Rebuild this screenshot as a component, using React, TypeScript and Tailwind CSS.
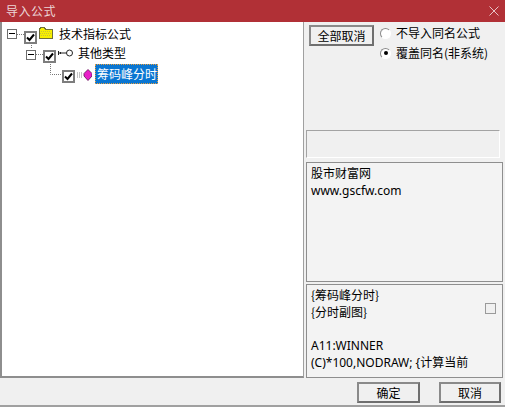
const font = { fontFamily: '"Noto Sans CJK SC", "Liberation Sans", sans-serif' }

function Expander({ className }: { className: string }) {
  return (
    <span className={`relative block w-[10px] h-[10px] border border-[#6d6d6d] bg-white shrink-0 ${className}`}>
      <span className="absolute left-[1px] top-[3px] w-[6px] h-[2px] border-t border-black" />
    </span>
  )
}

function Check({ className }: { className: string }) {
  return (
    <span className={`block w-[13px] h-[13px] border-2 border-[#7d7d7d] bg-white shrink-0 ${className}`}>
      <svg viewBox="0 0 9 9" className="w-[9px] h-[9px]">
        <path d="M1 4.5 L3.5 7 L8 1.5" fill="none" stroke="#000" strokeWidth="2" />
      </svg>
    </span>
  )
}

function Radio({ on, label }: { on?: boolean; label: string }) {
  return (
    <div className="flex items-center h-[20px]">
      <span className="flex items-center justify-center w-[11px] h-[11px] rounded-full border border-[#8a8a8a] border-r-white border-b-white bg-white shrink-0">
        {on && <span className="w-[4px] h-[4px] rounded-full bg-black" />}
      </span>
      <span className="ml-[5px] text-[12px] leading-[20px] text-black whitespace-nowrap">{label}</span>
    </div>
  )
}

function Btn({ label, className }: { label: string; className: string }) {
  return (
    <button className={`border-2 border-[#6f6f6f] border-t-[#8a8a8a] border-l-[#8a8a8a] bg-[#f0f0f0] text-[12px] leading-[16px] text-black ${className}`}>
      {label}
    </button>
  )
}

export default function App() {
  return (
    <div className="w-[505px] h-[407px] bg-[#f0f0f0] flex flex-col overflow-hidden" style={font}>
      <div className="h-[22px] bg-[#b13036] flex items-center justify-between shrink-0 pl-[6px] pr-[6px]">
        <span className="text-[12px] text-[#ecd5d6] tracking-[0.5px]">导入公式</span>
        <svg viewBox="0 0 10 10" className="w-[10px] h-[10px]">
          <path d="M0.5 0.5 L9.5 9.5 M9.5 0.5 L0.5 9.5" stroke="#e7c3c5" strokeWidth="1" />
        </svg>
      </div>

      <div className="flex h-[356px] shrink-0">
        <div className="relative w-[304px] bg-white border-l-2 border-b-2 border-[#8e8e8e] border-r border-r-[#a0a0a0] shrink-0">
          <svg className="absolute left-0 top-0 w-[100px] h-[70px]" viewBox="0 0 100 70">
            <path d="M15 12.5 H22 M29.5 21 V27 M34 32.5 H41 M48.5 40 V52.5 H60" fill="none" stroke="#777" strokeDasharray="1 1" />
          </svg>

          <div className="relative flex items-center h-[19px] mt-[2px]">
            <Expander className="ml-[5px] mt-[1px]" />
            <Check className="ml-[7px] mt-[7px]" />
            <svg viewBox="0 0 15 13" className="w-[15px] h-[13px] ml-[1px] -mt-[3px]" shapeRendering="crispEdges">
              <path d="M1 2 H2 V1 H6 V2 H7 V3 H14 V12 H1 Z" fill="#f7ef00" stroke="#6f6f3a" />
              <path d="M3 5 H13 M2 7 H13 M3 9 H13" stroke="#c9c23a" strokeDasharray="1 1" />
            </svg>
            <span className="ml-[6px] text-[12px] text-black whitespace-nowrap">技术指标公式</span>
          </div>

          <div className="relative flex items-center h-[19px]">
            <Expander className="ml-[24px] mt-[4px]" />
            <Check className="ml-[7px] mt-[7px]" />
            <svg viewBox="0 0 15 8" className="w-[15px] h-[8px] ml-[2px]">
              <path d="M0.5 2 V6 M2.5 3 V5 M0.5 4 H9" stroke="#222" fill="none" />
              <circle cx="11.5" cy="4" r="3" fill="#fff" stroke="#222" />
            </svg>
            <span className="ml-[5px] text-[12px] text-black whitespace-nowrap">其他类型</span>
          </div>

          <div className="relative flex items-center h-[20px] mt-[2px]">
            <Check className="ml-[60px] mt-[5px]" />
            <svg viewBox="0 0 15 12" className="w-[15px] h-[12px] ml-[2px] mt-[1px]">
              <path d="M0 4 H6 M0 6 H6 M0 8 H6" stroke="#888" strokeDasharray="1 1" />
              <path d="M11 0.5 L15 4.5 L15 7 L11 11.5 L7 7 L7 4.5 Z" fill="#e81fc8" stroke="#5a1250" strokeWidth="0.8" />
            </svg>
            <span className="ml-[3px] h-[20px] w-[63px] bg-[#0a76d2] border border-dotted border-[#e8a040] text-white text-[12px] leading-[18px] pl-[1px] whitespace-nowrap">
              筹码峰分时
            </span>
          </div>
        </div>

        <div className="flex-1 flex flex-col min-w-0">
          <div className="flex h-[108px] shrink-0 pt-[3px]">
            <Btn label="全部取消" className="ml-[5px] w-[65px] h-[21px]" />
            <div className="ml-[6px] -mt-[2px]">
              <Radio label="不导入同名公式" />
              <Radio on label="覆盖同名(非系统)" />
            </div>
          </div>
          <div className="ml-[2px] w-[194px] h-[28px] border border-[#a3a3a3] border-b-white border-r-white shrink-0" />
          <div className="ml-[2px] mt-[4px] w-[197px] h-[120px] border border-[#8e8e8e] bg-[#f3f3f3] px-[4px] py-[1px] text-[12px] leading-[18px] text-black shrink-0">
            <div>股市财富网</div>
            <div className="font-['Noto_Sans']">www.gscfw.com</div>
          </div>
          <div className="relative ml-[2px] mt-[2px] w-[197px] h-[94px] border border-[#8e8e8e] bg-[#f3f3f3] px-[4px] py-[1px] text-[12px] leading-[17px] text-black shrink-0">
            <div>{'{筹码峰分时}'}</div>
            <div>{'{分时副图}'}</div>
            <div className="h-[17px]" />
            <div className="font-['Noto_Sans','Noto_Sans_CJK_SC']">A11:WINNER</div>
            <div className="font-['Noto_Sans','Noto_Sans_CJK_SC'] whitespace-nowrap">(C)*100,NODRAW; {'{'}计算当前</div>
            <span className="absolute left-[178px] top-[18px] w-[11px] h-[11px] border border-[#9a9a9a] bg-[#f0f0f0]" />
          </div>
        </div>
      </div>

      <div className="flex-1 flex justify-end items-start pt-[4px] pr-[4px] border-b-2 border-[#a0a0a0]">
        <Btn label="确定" className="w-[63px] h-[21px] mr-[19px]" />
        <Btn label="取消" className="w-[62px] h-[21px]" />
      </div>
    </div>
  )
}
